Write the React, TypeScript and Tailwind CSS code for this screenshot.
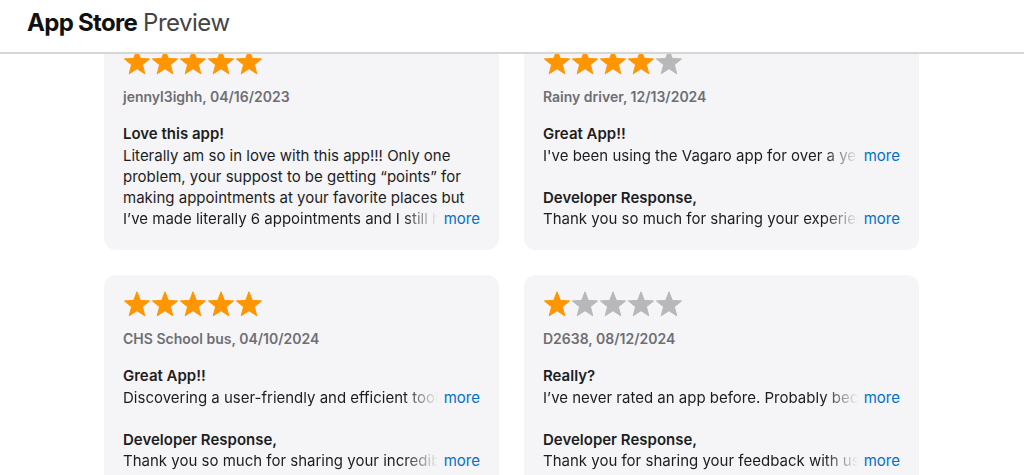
import React from "react";

const ORANGE = "#ff9500";
const GRAY = "#b8b8b8";

function Star({ filled }: { filled: boolean }) {
  return (
    <svg width="28" height="27" viewBox="0 0 28 27" className="shrink-0">
      <path
        d="M14 0.8 L17.3 9.4 L26.6 9.9 L19.4 15.8 L21.8 24.8 L14 19.7 L6.2 24.8 L8.6 15.8 L1.4 9.9 L10.7 9.4 Z"
        fill={filled ? ORANGE : GRAY}
        stroke={filled ? ORANGE : GRAY}
        strokeWidth="1"
        strokeLinejoin="round"
      />
    </svg>
  );
}

function Stars({ n }: { n: number }) {
  return (
    <div className="flex h-[27px] items-center">
      {[0, 1, 2, 3, 4].map((i) => (
        <Star key={i} filled={i < n} />
      ))}
    </div>
  );
}

function MoreLine({ text }: { text: string }) {
  return (
    <div className="flex items-baseline leading-[21px]">
      <span className="min-w-0 flex-1 overflow-hidden whitespace-nowrap [mask-image:linear-gradient(to_right,black_calc(100%-34px),transparent)]">
        {text}
      </span>
      <span className="ml-[6px] shrink-0 text-[#0070c9]">more</span>
    </div>
  );
}

type Review = {
  stars: number;
  meta: string;
  title: string;
  lines?: string[];
  body?: string;
  dev?: string;
};

function Card({ r }: { r: Review }) {
  return (
    <div className="rounded-[12px] bg-[#f5f5f7] px-[19px] pt-[16px] pb-[21px]">
      <Stars n={r.stars} />
      <div className="mt-[12px] text-[14px] font-semibold leading-[18px] text-[#6e6e73]">
        {r.meta}
      </div>
      <div className="mt-[17px] text-[15px] text-[#1d1d1f]">
        <div className="font-semibold leading-[22px]">{r.title}</div>
        {r.lines ? (
          <>
            {r.lines.slice(0, -1).map((l, i) => (
              <div key={i} className="whitespace-nowrap leading-[21px]">
                {l}
              </div>
            ))}
            <MoreLine text={r.lines[r.lines.length - 1]} />
          </>
        ) : (
          <>
            <MoreLine text={r.body || ""} />
            <div className="mt-[21px] font-semibold leading-[21px]">Developer Response,</div>
            <MoreLine text={r.dev || ""} />
          </>
        )}
      </div>
    </div>
  );
}

const reviews: Review[] = [
  {
    stars: 5,
    meta: "jennyl3ighh, 04/16/2023",
    title: "Love this app!",
    lines: [
      "Literally am so in love with this app!!! Only one",
      "problem, your suppost to be getting \u201cpoints\u201d for",
      "making appointments at your favorite places but",
      "I\u2019ve made literally 6 appointments and I still have",
    ],
  },
  {
    stars: 4,
    meta: "Rainy driver, 12/13/2024",
    title: "Great App!!",
    body: "I've been using the Vagaro app for over a year now and",
    dev: "Thank you so much for sharing your experience with us",
  },
  {
    stars: 5,
    meta: "CHS School bus, 04/10/2024",
    title: "Great App!!",
    body: "Discovering a user-friendly and efficient tool for booking",
    dev: "Thank you so much for sharing your incredible review",
  },
  {
    stars: 1,
    meta: "D2638, 08/12/2024",
    title: "Really?",
    body: "I\u2019ve never rated an app before. Probably because",
    dev: "Thank you for sharing your feedback with us. We are",
  },
];

export default function App() {
  return (
    <div
      className="flex h-[475px] w-[1024px] flex-col overflow-hidden bg-white"
      style={{ fontFamily: "Inter, 'Noto Sans', sans-serif" }}
    >
      <header className="z-10 flex h-[54px] shrink-0 items-center border-b-2 border-[#d6d6d6] bg-white px-[27px] pb-[6px]">
        <span className="text-[24px] font-bold tracking-[-0.7px] text-[#111]">App Store</span>
        <span className="ml-[6px] text-[24px] font-normal tracking-[-0.5px] text-[#444]">Preview</span>
      </header>
      <div className="flex-1 overflow-hidden">
        <div className="-mt-[21px] grid grid-cols-[395px_395px] gap-x-[25px] gap-y-[25px] pl-[104px]">
          {reviews.map((r, i) => (
            <Card key={i} r={r} />
          ))}
        </div>
      </div>
    </div>
  );
}
